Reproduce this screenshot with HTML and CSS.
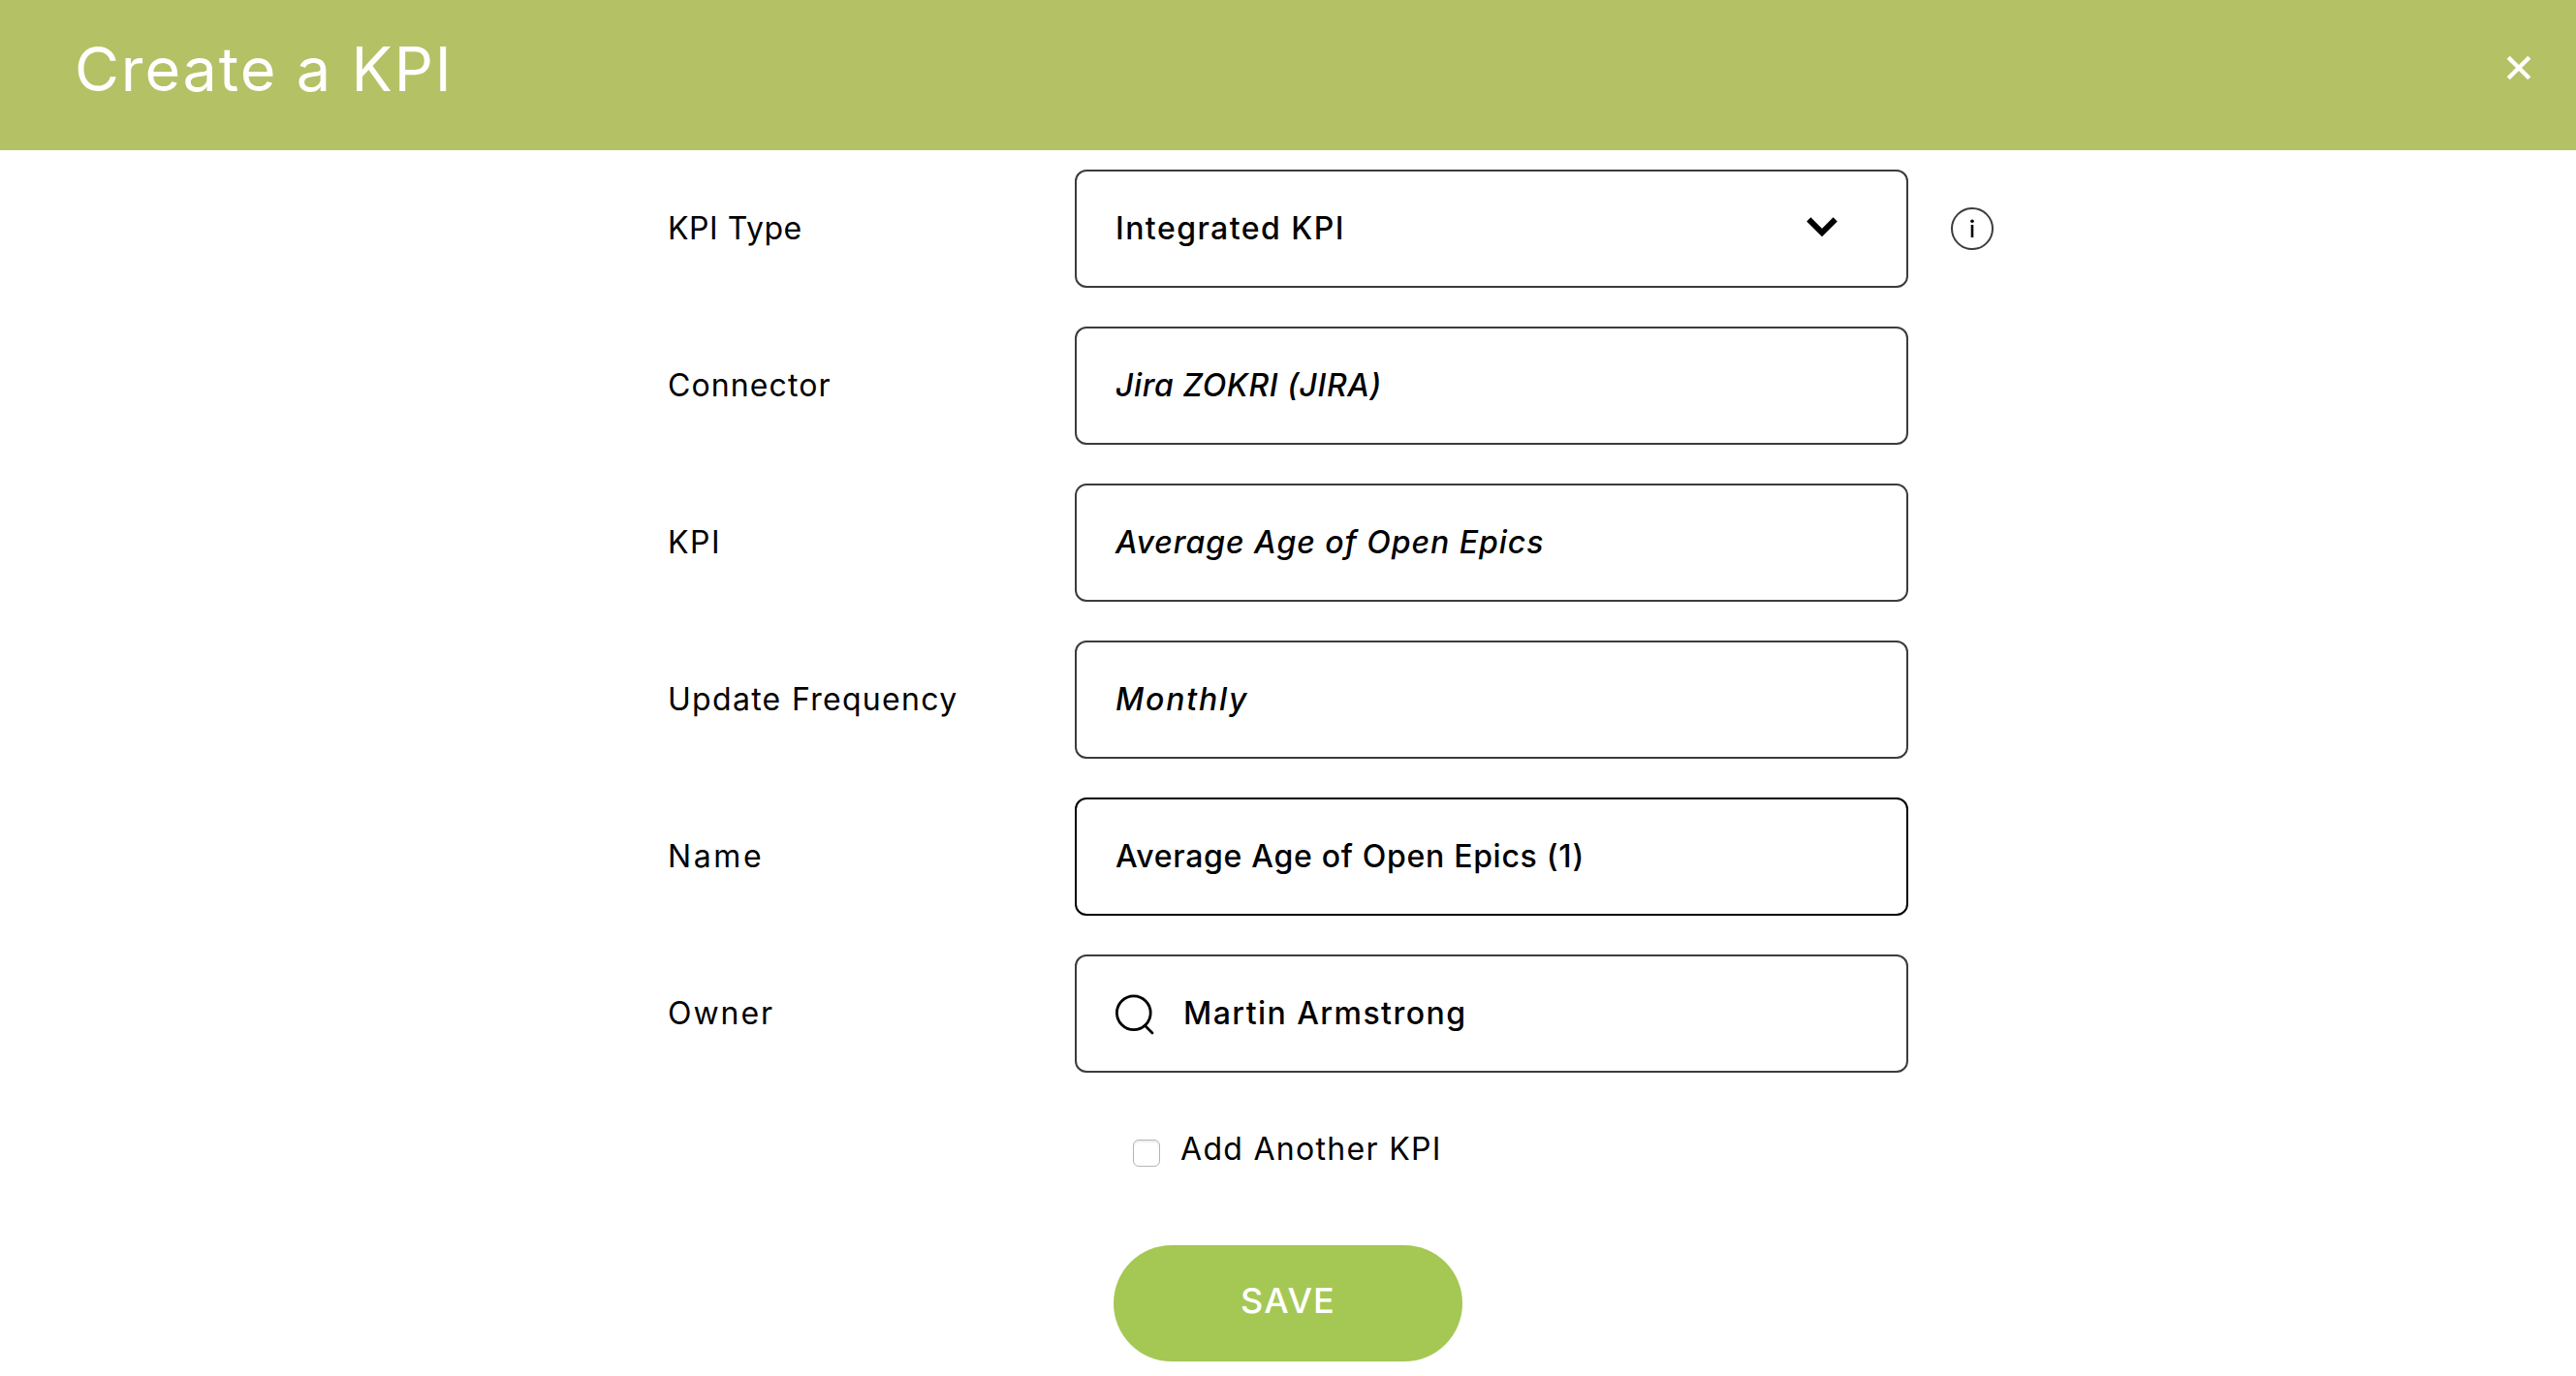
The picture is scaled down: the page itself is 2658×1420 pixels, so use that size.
FILE: index.html
```html
<!DOCTYPE html>
<html lang="en">
<head>
    <meta charset="UTF-8">
    <meta name="viewport" content="width=device-width, initial-scale=1.0">
    <title>Create a KPI</title>
    <link rel="stylesheet" href="styles.css">
</head>
<body>
    <header class="modal-header">
        <h1 class="modal-title">Create a KPI</h1>
        <svg class="close" viewBox="0 0 26 26">
            <path d="M2.2 2.2L23.8 23.8M23.8 2.2L2.2 23.8" fill="none" stroke="#fff" stroke-width="4.4"/>
        </svg>
    </header>

    <main class="kpi-form">
        <div class="form-row">
            <div class="label label-type">KPI Type</div>
            <div class="field field-select">
                <span class="value value-type">Integrated KPI</span>
                <svg class="chevron" viewBox="0 0 32 20">
                    <path d="M2.3 2.3L16 16L29.7 2.3" fill="none" stroke="#000" stroke-width="6"/>
                </svg>
            </div>
            <svg class="info" viewBox="0 0 44 44">
                <circle cx="22" cy="22" r="21" fill="none" stroke="#3c3c3c" stroke-width="2"/>
                <circle cx="22" cy="14.3" r="1.8"/>
                <path d="M22 18V31" stroke="#000" stroke-width="2.6"/>
            </svg>
        </div>
        <div class="form-row">
            <div class="label label-connector">Connector</div>
            <div class="field"><em class="value value-connector">Jira ZOKRI (JIRA)</em></div>
        </div>
        <div class="form-row">
            <div class="label label-kpi">KPI</div>
            <div class="field"><em class="value value-kpi">Average Age of Open Epics</em></div>
        </div>
        <div class="form-row">
            <div class="label label-frequency">Update Frequency</div>
            <div class="field"><em class="value value-frequency">Monthly</em></div>
        </div>
        <div class="form-row">
            <div class="label label-name">Name</div>
            <div class="field field-active"><span class="value value-name">Average Age of Open Epics (1)</span></div>
        </div>
        <div class="form-row">
            <div class="label label-owner">Owner</div>
            <div class="field">
                <svg class="search" viewBox="0 0 42 44">
                    <circle cx="18.8" cy="21.2" r="17.4" fill="none" stroke="#000" stroke-width="2.8"/>
                    <path d="M30.5 34.5L38 42" stroke="#000" stroke-width="2.8" stroke-linecap="round"/>
                </svg>
                <span class="value value-owner">Martin Armstrong</span>
            </div>
        </div>

        <div class="add-another">
            <span class="checkbox"></span>
            <span class="add-text">Add Another KPI</span>
        </div>
        <button class="save">SAVE</button>
    </main>
</body>
</html>
```

FILE: styles.css
```css
* {
    box-sizing: border-box;
}
body {
    margin: 0;
    height: 1420px;
    overflow: hidden;
    background: #fff;
    color: #000;
    font-family: Inter, "Liberation Sans", sans-serif;
    font-size: 32px;
}
.modal-header {
    display: flex;
    justify-content: space-between;
    height: 155px;
    padding: 0 46px 0 77px;
    background: #b4c165;
}
.modal-title {
    margin: 0;
    color: #fff;
    font-size: 63px;
    font-weight: 400;
    line-height: 142px;
    letter-spacing: 1.85px;
}
.close {
    width: 26px;
    height: 26px;
    margin-top: 57px;
}
.kpi-form {
    padding: 20px 0 0 689px;
}
.form-row {
    display: flex;
    align-items: center;
    height: 122px;
    margin-bottom: 40px;
}
.label {
    width: 420px;
    padding-bottom: 1px;
}
.field {
    display: flex;
    align-items: center;
    width: 860px;
    height: 122px;
    padding: 0 40px;
    border: 2px solid #3c3c3c;
    border-radius: 12px;
}
.field-active {
    border-color: #000;
}
.field-select {
    justify-content: space-between;
    padding-right: 71px;
}
.value {
    padding-bottom: 1px;
    font-weight: 500;
    white-space: pre;
}
.chevron {
    width: 32px;
    height: 20px;
    margin-bottom: 4px;
}
.info {
    width: 44px;
    height: 44px;
    margin-left: 44px;
}
.search {
    width: 42px;
    height: 44px;
    margin-right: 28px;
}

/* letter spacing per text */
.label-type { letter-spacing: 0.55px; }
.label-connector { letter-spacing: 1.1px; }
.label-kpi { letter-spacing: 1.5px; }
.label-frequency { letter-spacing: 1.3px; }
.label-name { letter-spacing: 2.6px; }
.label-owner { letter-spacing: 1.95px; }
.value-type { letter-spacing: 1.45px; }
.value-connector { letter-spacing: 0.6px; }
.value-kpi { letter-spacing: 0.95px; }
.value-frequency { letter-spacing: 1.8px; }
.value-name { letter-spacing: 0.7px; }
.value-owner { letter-spacing: 1.45px; }
.add-text { letter-spacing: 1.3px; }

.add-another {
    display: flex;
    align-items: center;
    height: 40px;
    margin: 59px 0 79px 480px;
}
.add-text {
    padding-bottom: 2px;
}
.checkbox {
    width: 28px;
    height: 28px;
    margin: 8px 21px 0 0;
    border: 1.5px solid #b5b5b5;
    border-radius: 6px;
    background: #fff;
    box-shadow: inset 0 2px 2px #eee;
}
.save {
    display: block;
    width: 360px;
    height: 120px;
    margin-left: 460px;
    padding: 0 0 6px;
    border: none;
    border-radius: 60px;
    background: #a5c855;
    color: #fff;
    font-family: inherit;
    font-size: 36px;
    font-weight: 500;
    letter-spacing: 1.2px;
}
```
